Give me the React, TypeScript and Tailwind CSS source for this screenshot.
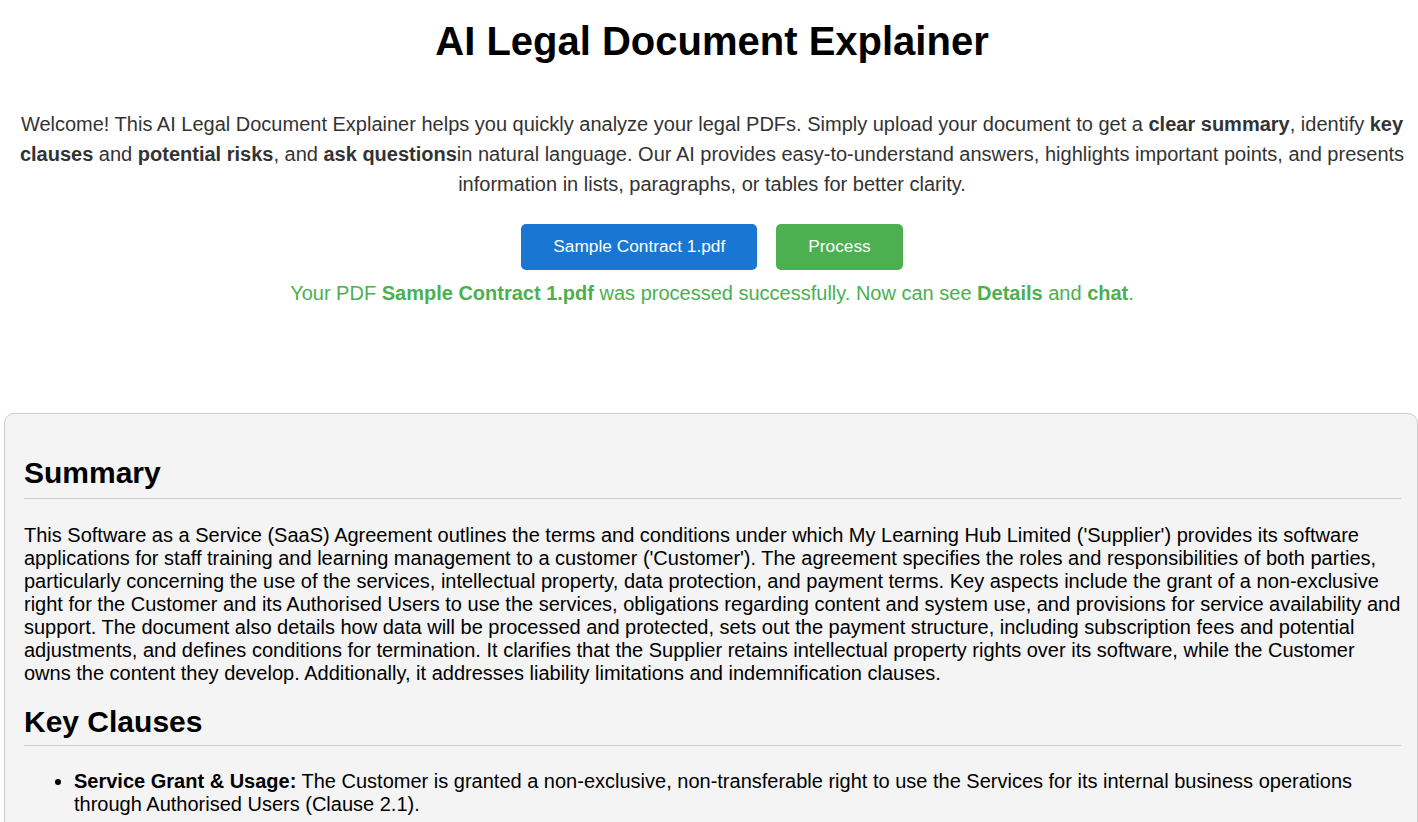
import React from 'react';

const App: React.FC = () => {
  const fileName = 'Sample Contract 1.pdf';

  return (
    <div className="min-h-screen bg-white font-['Liberation_Sans',Arial,sans-serif] text-black">
      <div className="pl-[18px] pr-[12px] pt-[18px]">
        <h1 className="text-center text-[40px] font-bold leading-[46px]">AI Legal Document Explainer</h1>

        <p className="mt-[45px] text-center text-[20px] leading-[30px] text-[#333]">
          Welcome! This AI Legal Document Explainer helps you quickly analyze your legal PDFs. Simply upload your
          document to get a <b>clear summary</b>, identify <b>key clauses</b> and <b>potential risks</b>, and{' '}
          <b>ask questions</b>in natural language. Our AI provides easy-to-understand answers, highlights important
          points, and presents information in lists, paragraphs, or tables for better clarity.
        </p>

        <div className="mt-[25px] flex justify-center gap-[19px]">
          <button className="h-[46px] rounded-[5px] bg-[#1976d2] px-8 text-[17.3px] text-white">{fileName}</button>
          <button className="h-[46px] rounded-[5px] bg-[#4caf50] px-8 text-[17.3px] text-white">Process</button>
        </div>

        <p className="mt-[12px] text-center text-[20px] leading-[23px] text-[#4caf50]">
          Your PDF <b>{fileName}</b> was processed successfully. Now can see <b>Details</b> and <b>chat</b>.
        </p>
      </div>

      <div className="ml-[4px] mt-[108px] rounded-[10px] border border-[#ccc] bg-[#f4f4f4] pb-8 pl-[19px] pr-[16px] pt-[42px]">
        <h2 className="border-b border-[#ccc] pb-[8px] text-[30px] font-bold leading-[34px]">Summary</h2>
        <p className="mt-[25px] text-[20px] leading-[23px]">
          This Software as a Service (SaaS) Agreement outlines the terms and conditions under which My Learning Hub
          Limited ('Supplier') provides its software applications for staff training and learning management to a
          customer ('Customer'). The agreement specifies the roles and responsibilities of both parties, particularly
          concerning the use of the services, intellectual property, data protection, and payment terms. Key aspects
          include the grant of a non-exclusive right for the Customer and its Authorised Users to use the services,
          obligations regarding content and system use, and provisions for service availability and support. The
          document also details how data will be processed and protected, sets out the payment structure, including
          subscription fees and potential adjustments, and defines conditions for termination. It clarifies that the
          Supplier retains intellectual property rights over its software, while the Customer owns the content they
          develop. Additionally, it addresses liability limitations and indemnification clauses.
        </p>

        <h2 className="mt-[20px] border-b border-[#ccc] pb-[6px] text-[30px] font-bold leading-[34px]">Key Clauses</h2>
        <ul className="mt-[24px] list-disc pl-[50px] text-[20px] leading-[23px]">
          <li>
            <b>Service Grant &amp; Usage:</b> The Customer is granted a non-exclusive, non-transferable right to use the
            Services for its internal business operations through Authorised Users (Clause 2.1).
          </li>
        </ul>
      </div>
    </div>
  );
};

export default App;
